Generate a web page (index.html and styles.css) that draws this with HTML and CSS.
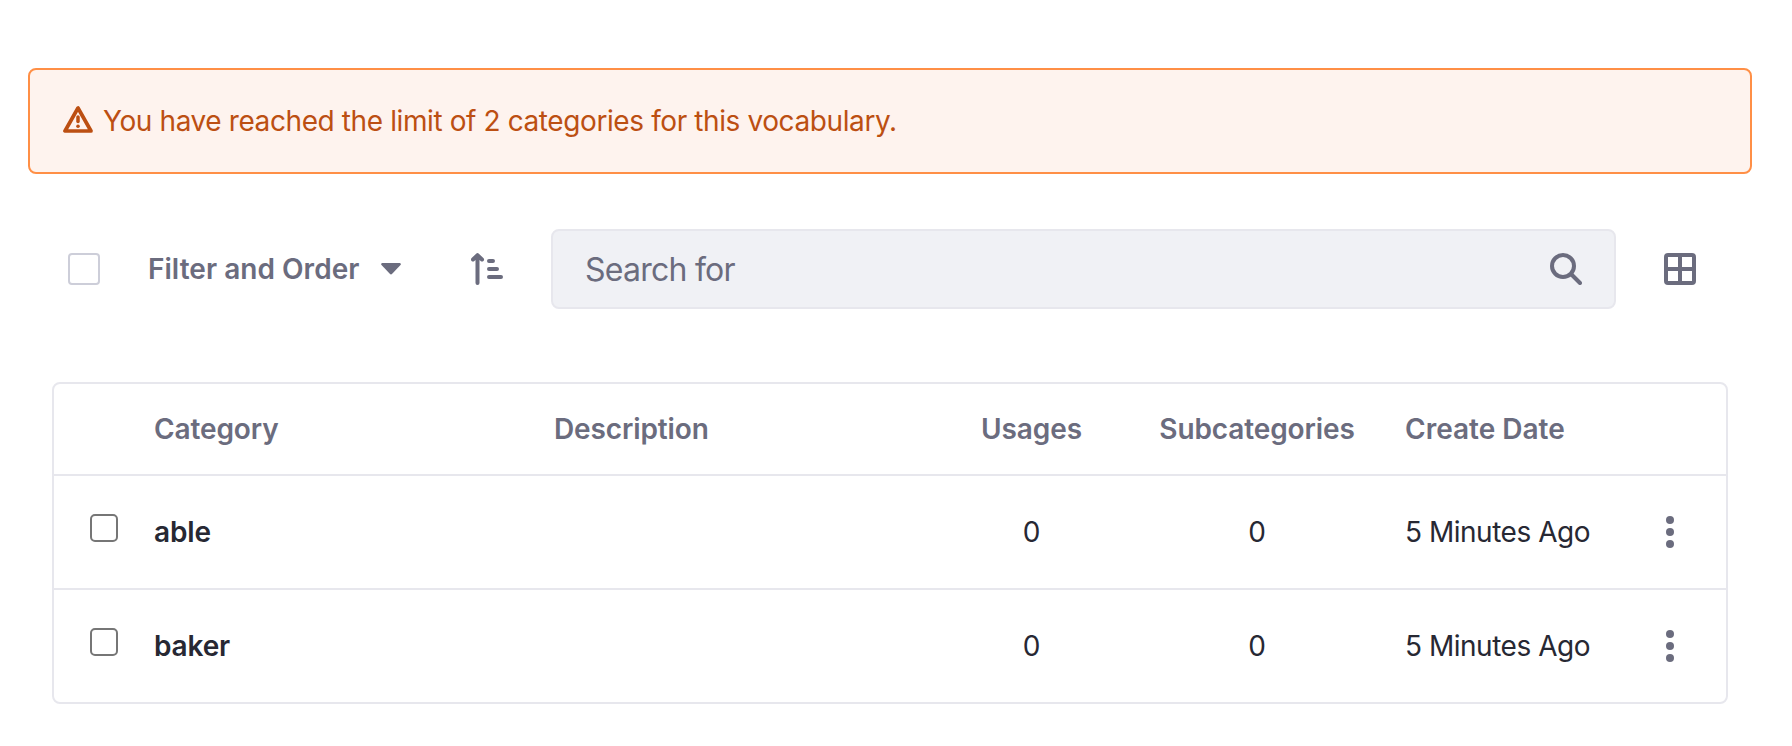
FILE: index.html
```html
<!DOCTYPE html>
<html lang="en">
<head>
<meta charset="utf-8">
<title>Categories</title>
<link rel="stylesheet" href="styles.css">
</head>
<body>
<main class="page">
  <div class="alert" role="alert">
    <svg class="alert-icon" viewBox="0 0 30 27" width="30" height="27"><path d="M15 2 2 25H28Z" fill="none" stroke="currentColor" stroke-width="3.700" stroke-linejoin="round"/><path d="M15 11v4.500" stroke="currentColor" stroke-width="3.500" stroke-linecap="round"/><circle cx="15" cy="20.300" r="1.800" fill="currentColor"/></svg>
    <span class="alert-text">You have reached the limit of 2 categories for this vocabulary.</span>
  </div>

  <div class="toolbar">
    <span class="check-all"></span>
    <button class="filter"><span class="filter-label">Filter and Order</span>
      <svg viewBox="0 0 20 12" width="20" height="12"><path d="M1.200 0H18.800Q20.600.500 19.500 2L11.200 10.800Q10 12 8.800 10.800L.500 2Q-.600.500 1.200 0Z" fill="currentColor"/></svg>
    </button>
    <button class="sort"><svg viewBox="0 0 32 32" width="32" height="32"><path d="M6.500 3v27M2 6.500l4.500-4.300L11 6.500M18 8h4M18 16h8M18 24h12" fill="none" stroke="currentColor" stroke-width="4" stroke-linecap="round" stroke-linejoin="round"/></svg></button>
    <div class="search"><span class="search-text">Search for</span>
      <svg viewBox="0 0 32 32" width="32" height="32"><g fill="none" stroke="currentColor" stroke-width="4" stroke-linecap="round"><circle cx="13" cy="13" r="11"/><path d="m21.500 21.500 8.500 8.500"/></g></svg>
    </div>
    <button class="view"><svg viewBox="0 0 32 32" width="32" height="32"><path d="M4 2H28Q30 2 30 4V28Q30 30 28 30H4Q2 30 2 28V4Q2 2 4 2ZM16 2V30M2 16H30" fill="none" stroke="currentColor" stroke-width="4"/></svg></button>
  </div>

  <div class="table">
    <div class="row head">
      <span></span><span>Category</span><span>Description</span><span class="num">Usages</span><span class="num">Subcategories</span><span class="head-date">Create Date</span><span></span>
    </div>
    <div class="row">
      <span class="box"></span><b>able</b><span></span><span class="num">0</span><span class="num">0</span><span class="date">5 Minutes Ago</span>
      <svg class="dots" viewBox="0 0 8 32" width="8" height="32" fill="currentColor"><circle cx="4" cy="4" r="4"/><circle cx="4" cy="16" r="4"/><circle cx="4" cy="28" r="4"/></svg>
    </div>
    <div class="row">
      <span class="box"></span><b>baker</b><span></span><span class="num">0</span><span class="num">0</span><span class="date">5 Minutes Ago</span>
      <svg class="dots" viewBox="0 0 8 32" width="8" height="32" fill="currentColor"><circle cx="4" cy="4" r="4"/><circle cx="4" cy="16" r="4"/><circle cx="4" cy="28" r="4"/></svg>
    </div>
  </div>
</main>
</body>
</html>
```

FILE: styles.css
```css
* { box-sizing: border-box; }
body {
  margin: 0;
  background: #fff;
  color: #272833;
  font: 28px/42px Inter, "Liberation Sans", sans-serif;
}
svg { display: block; flex: none; }
button {
  display: flex;
  align-items: center;
  padding: 0;
  border: 0;
  background: none;
  color: #6b6c7e;
  font: inherit;
}
.page { padding: 68px 40px 0 28px; height: 746px; }
.alert {
  display: flex;
  align-items: center;
  height: 106px;
  padding: 0 33px;
  gap: 10px;
  border: 2px solid #ff8f46;
  border-radius: 8px;
  background: #fef3ee;
  color: #bc4f12;
  white-space: nowrap;
}
.alert-text { letter-spacing: -0.400px; }
.alert-icon { margin-top: -3px; }
.toolbar {
  display: flex;
  align-items: center;
  height: 80px;
  margin: 55px 56px 0 40px;
  color: #6b6c7e;
}
.check-all {
  width: 32px;
  height: 32px;
  border: 2px solid #cdced9;
  border-radius: 4px;
}
.filter {
  width: 253px;
  margin-left: 48px;
  justify-content: space-between;
  font-weight: 600;
  white-space: nowrap;
}
.filter-label { letter-spacing: 0.040px; }
.sort { margin-left: 70px; }
.search {
  display: flex;
  align-items: center;
  justify-content: space-between;
  width: 1065px;
  height: 80px;
  margin: 0 48px;
  padding: 0 32px;
  border: 2px solid #e7e7ed;
  border-radius: 8px;
  background: #f0f1f5;
  font-size: 32px;
}
.search-text { padding-top: 2px; letter-spacing: -0.750px; }
.table {
  margin: 73px 24px 0;
  border: 2px solid #e7e7ed;
  border-radius: 8px;
}
.row {
  display: grid;
  grid-template-columns: 100px 400px 382px 191px 278px 249px 1fr;
  align-items: center;
  height: 114px;
  border-top: 2px solid #e7e7ed;
  white-space: nowrap;
}
.row.head {
  height: 90px;
  border-top: 0;
  color: #6b6c7e;
  font-weight: 600;
  letter-spacing: -0.120px;
}
.head-date { letter-spacing: 0; }
.row b { font-weight: 600; letter-spacing: -0.150px; }
.num { justify-self: start; width: 191px; text-align: center; }
.num + .num { width: 260px; }
.date { letter-spacing: -0.480px; }
.box {
  width: 28px;
  height: 28px;
  margin: -8px 0 0 36px;
  border: 2px solid #767676;
  border-radius: 5px;
}
.dots { margin-left: 12px; color: #6b6c7e; }
```
